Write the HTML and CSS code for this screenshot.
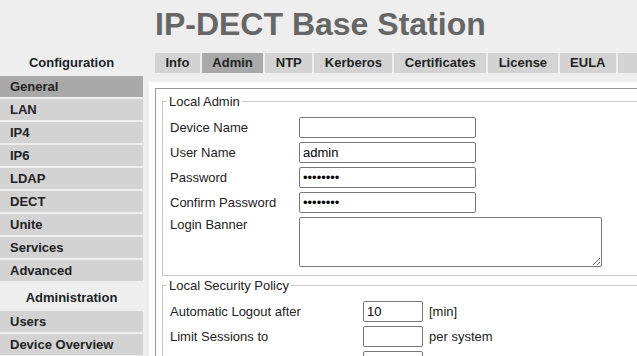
FILE: index.html
```html
<!DOCTYPE html>
<html lang="en">
<head>
    <meta charset="UTF-8">
    <meta name="viewport" content="width=device-width, initial-scale=1.0">
    <title>IP-DECT Base Station</title>
    <link rel="stylesheet" href="styles.css">
</head>
<body>
    <div class="layout">
        <div class="nav">
            <div class="nav-head">Configuration</div>
            <a class="nav-item active">General</a>
            <a class="nav-item">LAN</a>
            <a class="nav-item">IP4</a>
            <a class="nav-item">IP6</a>
            <a class="nav-item">LDAP</a>
            <a class="nav-item">DECT</a>
            <a class="nav-item">Unite</a>
            <a class="nav-item">Services</a>
            <a class="nav-item">Advanced</a>
            <div class="nav-head">Administration</div>
            <a class="nav-item">Users</a>
            <a class="nav-item">Device Overview</a>
        </div>

        <div class="main">
            <h1 class="title">IP-DECT Base Station</h1>

            <div class="tabs">
                <span class="tab">Info</span>
                <span class="tab active">Admin</span>
                <span class="tab">NTP</span>
                <span class="tab">Kerberos</span>
                <span class="tab">Certificates</span>
                <span class="tab">License</span>
                <span class="tab">EULA</span>
                <span class="tab filler"></span>
            </div>

            <div class="panel">
                <div class="box">
                    <fieldset>
                        <legend>Local Admin</legend>
                        <table>
                            <tr>
                                <td class="lbl">Device Name</td>
                                <td><input type="text" class="field"></td>
                            </tr>
                            <tr>
                                <td class="lbl">User Name</td>
                                <td><input type="text" class="field" value="admin"></td>
                            </tr>
                            <tr>
                                <td class="lbl">Password</td>
                                <td><input type="password" class="field" value="12345678"></td>
                            </tr>
                            <tr>
                                <td class="lbl">Confirm Password</td>
                                <td><input type="password" class="field" value="12345678"></td>
                            </tr>
                            <tr>
                                <td class="lbl top">Login Banner</td>
                                <td><textarea class="banner"></textarea></td>
                            </tr>
                        </table>
                    </fieldset>

                    <fieldset>
                        <legend>Local Security Policy</legend>
                        <table>
                            <tr>
                                <td class="lbl-wide">Automatic Logout after</td>
                                <td><input type="text" class="field short" value="10"></td>
                                <td>[min]</td>
                            </tr>
                            <tr>
                                <td class="lbl-wide">Limit Sessions to</td>
                                <td><input type="text" class="field short"></td>
                                <td>per system</td>
                            </tr>
                            <tr>
                                <td class="lbl-wide"></td>
                                <td><input type="text" class="field short"></td>
                                <td></td>
                            </tr>
                        </table>
                    </fieldset>
                </div>
            </div>
        </div>
    </div>
</body>
</html>
```

FILE: styles.css
```css
html, body {
    margin: 0;
    overflow: hidden;
}
body {
    background: #eee;
    font-family: "Liberation Sans", Arial, sans-serif;
    font-size: 13px;
    color: #222;
}
.layout {
    display: grid;
    grid-template-columns: 143px 1fr;
    column-gap: 6px;
    height: 100vh;
}

/* left navigation */
.nav {
    display: flex;
    flex-direction: column;
    gap: 2px;
    padding-top: 48px;
}
.nav-head {
    box-sizing: border-box;
    height: 26px;
    padding-top: 4px;
    line-height: 22px;
    text-align: center;
    font-weight: bold;
}
.nav-item {
    height: 21px;
    line-height: 21px;
    padding-left: 10px;
    background: #d3d3d3;
    font-weight: bold;
}
.nav-item.active {
    background: #a9a9a9;
}

/* right side */
.main {
    min-width: 0;
    overflow: hidden;
    display: flex;
    flex-direction: column;
}
.title {
    margin: 0;
    padding: 6px 0 0 6px;
    font-size: 32px;
    line-height: 37px;
    color: #666;
}
.tabs {
    display: flex;
    gap: 2px;
    margin: 10px 0 0 6px;
}
.tab {
    height: 20px;
    line-height: 20px;
    padding: 0 10.5px;
    background: #d3d3d3;
    font-weight: bold;
    white-space: nowrap;
}
.tab.active {
    background: #a9a9a9;
}
.tab.filler {
    flex: 1;
}
.panel {
    flex: 1;
    margin-top: 9px;
    padding: 6px 0 0 6px;
    background: #fff;
}
.box {
    width: 640px;
    height: 100%;
    padding: 5px 6px 0 6px;
    border: 1px solid #999;
}

/* form groups */
fieldset {
    margin: 0 0 2px;
    padding: 6px 6px 6px 4px;
    border: 1px solid #c8c8c8;
    min-width: 0;
}
legend {
    padding: 0 2px;
    line-height: 15px;
}
table {
    border-collapse: collapse;
}
td {
    padding: 2px 3px;
    vertical-align: middle;
}
td.top {
    vertical-align: top;
}
.lbl {
    width: 123px;
}
.lbl-wide {
    width: 187px;
}
.field {
    display: block;
    box-sizing: border-box;
    width: 177px;
    height: 21px;
    padding: 0 3px;
    border: 1px solid #767676;
    border-radius: 2px;
    font-family: "Liberation Sans", Arial, sans-serif;
    font-size: 13px;
    color: #000;
}
.field.short {
    width: 60px;
}
.banner {
    display: block;
    box-sizing: border-box;
    width: 303px;
    height: 50px;
    border: 1px solid #767676;
    border-radius: 2px;
}
```
